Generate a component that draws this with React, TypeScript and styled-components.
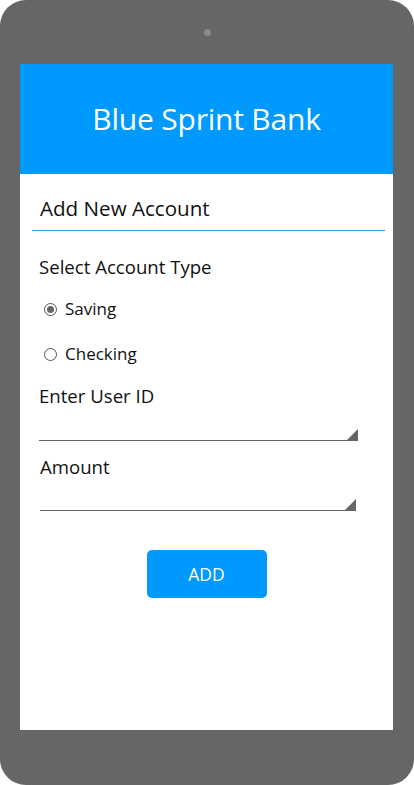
import React from "react";
import styled, { createGlobalStyle } from "styled-components";

const Global = createGlobalStyle`
  html, body { margin: 0; padding: 0; background: #ffffff; }
  body { font-family: "Open Sans", "Noto Sans", sans-serif; }
`;

const Device = styled.div`
  width: 414px;
  height: 785px;
  box-sizing: border-box;
  background: #666666;
  border-radius: 26px;
  padding: 0 21px 55px 20px;
  display: flex;
  flex-direction: column;
`;

const DeviceTop = styled.div`
  height: 64px;
  display: flex;
  align-items: center;
  justify-content: center;
  padding-left: 1px;
`;

const Camera = styled.div`
  width: 7px;
  height: 7px;
  border-radius: 50%;
  background: #8a8a8a;
`;

const Screen = styled.div`
  flex: 1;
  background: #ffffff;
  display: flex;
  flex-direction: column;
`;

const Header = styled.header`
  height: 110px;
  background: #0099fe;
  display: flex;
  align-items: center;
  justify-content: center;
`;

const Title = styled.h1`
  margin: 0;
  font-weight: 400;
  font-size: 30px;
  color: #ffffff;
  letter-spacing: -0.2px;
  padding-bottom: 1px;
`;

const Form = styled.div`
  display: flex;
  flex-direction: column;
`;

const PageTitle = styled.h2`
  margin: 18px 8px 0 12px;
  padding: 0 0 6px 8px;
  font-weight: 400;
  font-size: 20.6px;
  line-height: 32px;
  color: #111111;
  border-bottom: 1px solid #3399cc;
`;

const Label = styled.div<{ $top: number; $left?: number }>`
  margin: ${(p) => p.$top}px 0 0 ${(p) => p.$left ?? 19}px;
  font-size: 18.6px;
  line-height: 26px;
  color: #111111;
`;

const RadioRow = styled.label<{ $top: number }>`
  display: flex;
  align-items: center;
  gap: 8px;
  margin: ${(p) => p.$top}px 0 0 24px;
  font-size: 17px;
  line-height: 24px;
  color: #111111;
`;

const RadioCircle = styled.span<{ $checked?: boolean }>`
  width: 13px;
  height: 13px;
  box-sizing: border-box;
  border: 1px solid #555555;
  border-radius: 50%;
  display: flex;
  align-items: center;
  justify-content: center;
  background: #ffffff;
  &::after {
    content: "";
    width: 7px;
    height: 7px;
    border-radius: 50%;
    background: ${(p) => (p.$checked ? "#666666" : "transparent")};
  }
`;

const Field = styled.div<{ $left: number; $width: number; $top: number }>`
  position: relative;
  margin: ${(p) => p.$top}px 0 0 ${(p) => p.$left}px;
  width: ${(p) => p.$width}px;
  height: 26px;
  border-bottom: 1px solid #666666;
`;

const Grip = styled.svg`
  position: absolute;
  right: 0;
  bottom: -1px;
`;

const ButtonRow = styled.div`
  display: flex;
  justify-content: center;
  margin-top: 39px;
`;

const AddButton = styled.button`
  width: 120px;
  height: 48px;
  border: none;
  border-radius: 5px;
  background: #0099fe;
  color: #ffffff;
  font-family: "Open Sans", "Noto Sans", sans-serif;
  font-size: 17.5px;
  padding: 0;
`;

function InputLine({ left, width, top }: { left: number; width: number; top: number }) {
  return (
    <Field $left={left} $width={width} $top={top}>
      <Grip width="12" height="12" viewBox="0 0 12 12">
        <polygon points="12,0 12,12 0,12" fill="#666666" />
      </Grip>
    </Field>
  );
}

export default function App() {
  return (
    <>
      <Global />
      <Device>
        <DeviceTop>
          <Camera />
        </DeviceTop>
        <Screen>
          <Header>
            <Title>Blue Sprint Bank</Title>
          </Header>
          <Form>
            <PageTitle>Add New Account</PageTitle>
            <Label $top={23}>Select Account Type</Label>
            <RadioRow $top={17}>
              <RadioCircle $checked />
              Saving
            </RadioRow>
            <RadioRow $top={21}>
              <RadioCircle />
              Checking
            </RadioRow>
            <Label $top={17}>Enter User ID</Label>
            <InputLine left={19} width={319} top={5} />
            <Label $top={13} $left={20}>Amount</Label>
            <InputLine left={20} width={316} top={4} />
            <ButtonRow>
              <AddButton>ADD</AddButton>
            </ButtonRow>
          </Form>
        </Screen>
      </Device>
    </>
  );
}
